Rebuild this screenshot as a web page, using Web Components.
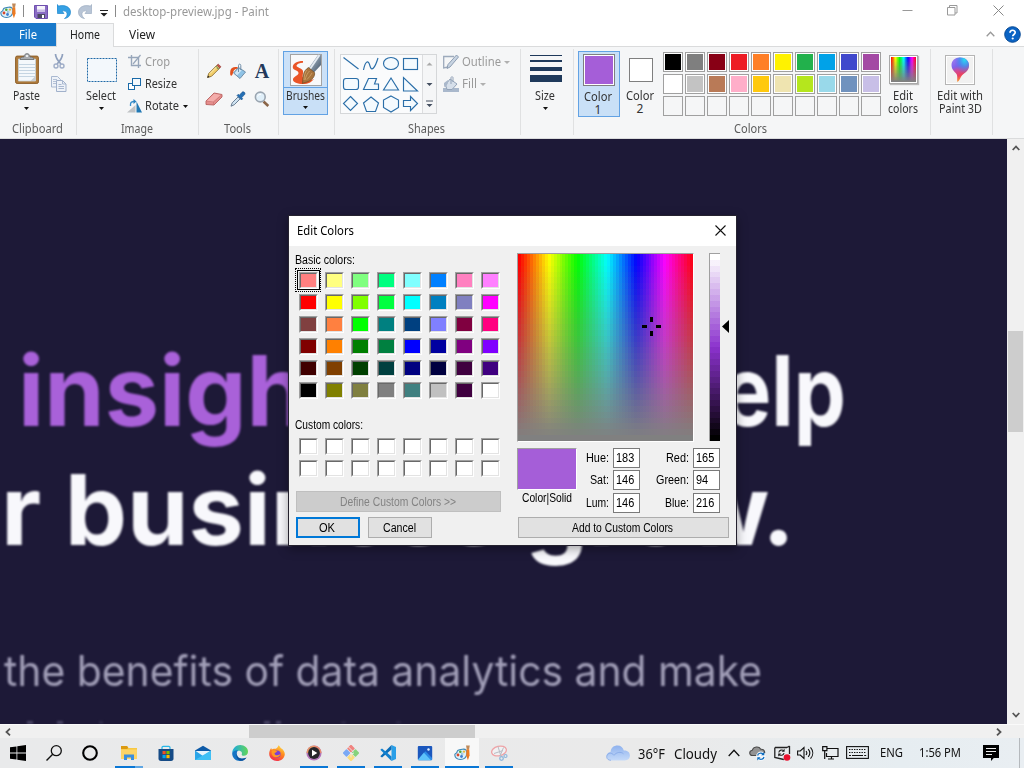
<!DOCTYPE html>
<html lang="en">
<head>
<meta charset="utf-8">
<title>desktop-preview.jpg - Paint</title>
<style>
html,body{margin:0;padding:0;background:#1d1937;overflow:hidden}
</style>
</head>
<body>
<paint-desktop></paint-desktop>
<script>
const define = (name, html, after) => customElements.define(name, class extends HTMLElement {
  connectedCallback() {
    if (this.shadowRoot) return;
    const root = this.attachShadow({ mode: 'open' });
    root.innerHTML = typeof html === 'function' ? html(this) : html;
    if (after) after(this, root);
  }
});

/* text squeezed or stretched to a given advance width */
define('fit-text', `<style>:host{display:inline-block;white-space:pre;flex:none}span{display:inline-block;transform-origin:0 50%}</style><span><slot></slot></span>`,
  (el, root) => {
    const w = +el.getAttribute('w');
    if (!w) return;
    const s = root.querySelector('span');
    const n = s.getBoundingClientRect().width;
    el.style.width = w + 'px';
    if (n) s.style.transform = `scaleX(${w / n})`;
  });

const PALETTE = `<path d="M8.5 4.2C12 3.6 13.3 6 12.8 9c-.5 3.500-3 5.500-6.500 5.500C3 14.500.8 12.500.8 9.800c0-1.300 1.200-1.300 1.800-2 .6-.7.3-1.800 1.500-2.500 1.300-.7 3-.9 4.400-1.100z" fill="#dff0fa" stroke="#3a86b5" stroke-width="1.100"/><circle cx="6.300" cy="6.800" r="1.300" fill="#4aa83c"/><circle cx="10" cy="6.600" r="1.200" fill="#e8b93a"/><circle cx="4" cy="10" r="1.400" fill="#d9482b"/><circle cx="7.500" cy="11.500" r="1.400" fill="#3f7fd0"/><circle cx="8.200" cy="9" r=".9" fill="#fff" stroke="#3a86b5" stroke-width=".5"/><path d="M12 .5h3.800l-.8 4h-2.200z" fill="#c08a5a"/><path d="M12.500 4.300h2.700l.4 6-1.700 5-1.700-5z" fill="#ee7b22"/>`;
const BUCKET = (a, b, c) => `<path d="M8.500 4.500L15.500 9l-5.500 6.500L3.500 10z" fill="${a}" stroke="${b}" stroke-width="1"/><path d="M8.500 5.500l3 2-4.500 5L4.800 10z" fill="#fff" opacity=".6"/><path d="M8.500 9V2.500c0-1.800 2.300-1.800 2.300 0V7" fill="none" stroke="${b}"/><path d="M8 4.300C4 3.200 1 4.500.4 7.500c-.3 2-.6 4.800.9 5.300 1.500-.3 1.700-3.300 2.400-5C4.500 6.300 6 5.800 7 5.700z" fill="${c}"/>`;
const ICONS = {
  palette: [16, 16, PALETTE],
  save: [14, 14, `<path d="M.5.500h13v13H2L.5 12z" fill="#8a6cc4" stroke="#6f4fae"/><path d="M3 1h8v5.500H3z" fill="#f6f4fb"/><path d="M3 4.500h8V7H3z" fill="#c9bde6"/><path d="M3.500 9h7.500v4H3.500z" fill="#4c4a63"/><path d="M8 10h2v3H8z" fill="#fff"/>`],
  undo: [14, 15, `<path d="M0 6V.5l1.800 1.600C8 .5 13.500 3 13.500 8.200c0 3.500-2.500 5.800-6 6.300 2-1.500 2.800-3 2.600-4.800-.3-2.500-2.800-3.400-5-2.500L7 9.500H.5z" fill="#35a0e4" stroke="#1f86cc" stroke-width=".7"/>`],
  redo: [14, 15, `<path d="M14 6V.5l-1.800 1.600C6 .5.5 3 .5 8.200c0 3.500 2.500 5.800 6 6.300-2-1.500-2.800-3-2.600-4.800.3-2.500 2.800-3.400 5-2.500L7 9.500h6.500z" fill="#b8c5d6" stroke="#9dadc2" stroke-width=".7"/>`],
  qat: [8, 8, `<path d="M0 1h8v1H0zM.5 4h7L4 7.500z" fill="#222"/>`],
  min: [11, 11, `<path d="M.5 5.500h10" stroke="#999"/>`],
  restore: [11, 11, `<path d="M.5 2.500h7.500v7.500H.5zM2.500 2.500v-2h7.500v7.500h-2" fill="none" stroke="#999"/>`],
  close: [11, 11, `<path d="M.5.500l10 10M10.500.500l-10 10" stroke="#888"/>`],
  closed: [11, 11, `<path d="M.5.500l10 10M10.500.500l-10 10" stroke="#111" stroke-width="1.100"/>`],
  chev: [9, 6, `<path d="M.7 5.300l3.800-4 3.800 4" fill="none" stroke="#999" stroke-width="1.300"/>`],
  help: [17, 17, `<circle cx="8.500" cy="8.500" r="7.800" fill="#0a63c4" stroke="#094a94"/><path d="M6 6.800c0-3.400 5.200-3.300 5.200-.3 0 1.900-2.500 2-2.500 3.800" fill="none" stroke="#fff" stroke-width="1.700"/><circle cx="8.700" cy="12.500" r="1.100" fill="#fff"/>`],
  arr: [5, 3, `<path d="M0 0h5L2.500 3z" fill="#111"/>`],
  arrg: [6, 3, `<path d="M0 0h6L3 3z" fill="#b0b0b0"/>`],
  paste: [24, 31, `<rect x=".6" y="3.100" width="22.800" height="27.300" rx="1.500" fill="#b07c3c" stroke="#8d5f2a"/><path d="M3.500 6h17v22h-17z" fill="#f4f8fb" stroke="#c9d4dc" stroke-width=".8"/><path d="M4 11.500h16M4 14.500h16M4 17.500h16M4 20.500h16M4 23.500h16" stroke="#c5d5e2"/><path d="M15.500 28l5-5v5z" fill="#c8ccd0"/><path d="M5 6.500c0-2 2-2.500 4-2.500 0-4.500 6-4.500 6 0 2 0 4 .5 4 2.500z" fill="#a9acb0" stroke="#66696d" stroke-width=".8"/><circle cx="12" cy="3" r="1" fill="#fff"/>`],
  cut: [16, 16, `<path d="M4.500 1c0 3 1.500 6 5.500 10M11.500 1c0 3-1.500 6-5.500 10" stroke="#8fa0bd" stroke-width="1.700" fill="none"/><circle cx="5" cy="13" r="2" fill="none" stroke="#a0aec8" stroke-width="1.400"/><circle cx="11" cy="13" r="2" fill="none" stroke="#a0aec8" stroke-width="1.400"/>`],
  copy: [16, 16, `<path d="M.5.500h6l3 3v7.500h-9z" fill="#eef2f8" stroke="#a9b8d0"/><path d="M2 3.500h4M2 5.500h5M2 7.500h5" stroke="#b4c1d6"/><path d="M5.500 4.500h6l3.500 3.500v7.500h-9.500z" fill="#eef2f8" stroke="#a1b1cb"/><path d="M11.500 4.500v3.500h3.500M7.500 8.500h3M7.500 10.500h5.500M7.500 12.500h5.500" fill="none" stroke="#a9b8d0"/>`],
  select: [30, 24, `<rect x=".5" y=".5" width="29" height="23" fill="#f3f8fc" stroke="#1f68a6" stroke-dasharray="2 1"/>`],
  crop: [16, 16, `<path d="M4.500 1v10.500H14M1 3.500h10.500V14" fill="none" stroke="#97a6ba" stroke-width="1.400"/><path d="M6 10l7.500-9" stroke="#97a6ba" stroke-width="1.200"/>`],
  resize: [16, 16, `<rect x="1.500" y="7.500" width="6" height="6" fill="#fff" stroke="#1a6aa8"/><rect x="5.500" y="2.500" width="8" height="7" fill="#f4f9fd" stroke="#1a6aa8"/>`],
  rotate: [16, 16, `<path d="M0 14.500h8.500V7z" fill="#c0c3c6"/><path d="M9.500 14.500V3.500l5.500 11z" fill="#2178b4"/><path d="M3.500 8V6.500C3.500 4.500 5 3.500 7 3.500" fill="none" stroke="#3a8fcb" stroke-width="1.300"/><path d="M6.500 1l3 2.500-3 2.500z" fill="#2a82c0"/>`],
  pencil: [16, 16, `<path d="M1.500 14.500l1.200-4L11 2.200l2.800 2.800-8.300 8.300z" fill="#f2cf6b" stroke="#8c6d2e" stroke-width=".9"/><path d="M1.300 14.700l.7-2.300 1.600 1.600z" fill="#222"/><path d="M11 2.200l1.200-1.100 2.800 2.700L13.800 5z" fill="#c7564f" stroke="#8e3832" stroke-width=".6"/><path d="M9.800 3.400l2.800 2.800" stroke="#6b8a5a" stroke-width="1.200"/><path d="M4 10.500l6.500-6.500" stroke="#fff0b8" stroke-width="1"/>`],
  fill: [16, 16, BUCKET('#8fc3e6', '#6f8ea8', '#e2511f')],
  eraser: [18, 14, `<path d="M1 9l8-8 8 1.500V5L9 13l-8-.5z" fill="#e58d8c" stroke="#b8605f" stroke-width=".9"/><path d="M1 9l7.500.8L17 2.500M8.500 9.800V13" fill="none" stroke="#c97574" stroke-width=".7"/><path d="M2 8.700l7.200-7 6.500 1.200-7.500 6.500z" fill="#f4adab"/>`],
  picker: [16, 16, `<path d="M1 15.200l1.200-3.400 6-6 2 2-6 6z" fill="#cfe3f1" stroke="#5d7389" stroke-width=".9"/><path d="M7 4.500l4.500 4.500 1.200-1.200-1-1.200 2.800-2.800c1.500-1.700-.8-4-2.500-2.500L9.300 4.200 8.200 3.300z" fill="#2570b5" stroke="#17518a" stroke-width=".6"/>`],
  zoom: [16, 16, `<path d="M9.500 10.500l4.800 4.500" stroke="#8a6548" stroke-width="2.600"/><circle cx="6.300" cy="6" r="4.900" fill="#e0eff9" stroke="#9aa5b0" stroke-width="1.600"/><path d="M3.500 5.500c.5-1.500 2-2.500 3.500-2" stroke="#fff" fill="none"/>`],
  brush: [32, 32, `<defs><linearGradient id="g" x1="0" y1="0" x2="1" y2="1"><stop offset="0" stop-color="#b9c4cf"/><stop offset=".5" stop-color="#7e8fa0"/><stop offset="1" stop-color="#3f5063"/></linearGradient></defs><rect x=".5" y=".5" width="31" height="31" fill="#f8f9fa" stroke="#a3a3a3"/><path d="M13 7C7 7 2.500 9.500 2.800 13.500c.3 3 5.500 2.500 5.700 5.500.2 2.500-4.500 3-5.500 6-.7 3.500 5 5 10 5 5.500 0 8.500-2 11-5-3.500 1.500-8 2-10 0-2.500-2.500-.5-5-1-8-.5-3-7-3.500-6.500-5.500.4-1.500 3.500-2.500 6.500-2.700z" fill="#ea5527"/><path d="M31 1v10l-7.500 8-5-4.500L28 1z" fill="url(#g)"/><path d="M29.500 1L20 15" stroke="#e4ebf2" stroke-width="2"/><path d="M18.500 13.500l6 5c1 4-3 8-7.500 9.500-2 .5-2.500.5-4.500 1.500.5-3 .2-6 1-9 .5-3 2.500-5.500 5-7z" fill="#a8743c" stroke="#6e4a22" stroke-width=".7"/><path d="M17 16c-2 2-3 6-3 10M19.500 17c-2 2-3.500 5-4.500 9M22 19c-1.500 2.500-3 4.500-5 6.500" stroke="#d2a56c" fill="none" stroke-width=".8"/>`],
  pen: [16, 16, `<path d="M11 2.500H.7V14L5 13" fill="none" stroke="#9daabc" stroke-width="1.300"/><path d="M4 14.500l1-4L13.500 1l2 2-8.500 10z" fill="#c8d4e2" stroke="#8495ab" stroke-width=".9"/>`],
  fillg: [16, 16, `<path d="M0 12h16v4H0z" fill="#a9b8cc"/><path d="M7 3l7 5-5 5.500H4L2.500 9z" fill="#d6dfea" stroke="#93a3b8" stroke-width="1"/><path d="M8 8V1.500c0-1 2-1 2 0V6" fill="none" stroke="#93a3b8"/><path d="M1 7l4-3v3c-1 1-1 3-2.500 4S1 9 1 7z" fill="#aab8cb"/>`],
  sizes: [32, 28, `<path d="M0 .5h32" stroke="#1e395b"/><path d="M0 5h32v2H0zM0 12h32v4H0zM0 20h32v7H0z" fill="#1e395b"/>`],
  p3d: [30, 30, `<defs><linearGradient id="a" x1=".2" y1="0" x2=".5" y2="1"><stop offset="0" stop-color="#a07cf0"/><stop offset=".35" stop-color="#7f63ea"/><stop offset=".52" stop-color="#cf4a9a"/><stop offset=".75" stop-color="#ec3f5c"/><stop offset="1" stop-color="#f7b52c"/></linearGradient><radialGradient id="b" cx=".75" cy=".08" r=".6"><stop offset="0" stop-color="#27e0f0"/><stop offset=".5" stop-color="#3f8ff0" stop-opacity=".8"/><stop offset="1" stop-color="#5a6cf0" stop-opacity="0"/></radialGradient></defs><rect x=".5" y=".5" width="29" height="29" fill="#fff" stroke="#b5b5b5"/><rect x="2" y="2" width="26" height="26" fill="#f1f1f1"/><path d="M15 2.500c5.500 0 9 3.500 9 8 0 6-5.500 7.500-7.500 10.500-1.200 2-2 4.500-4 6-.8-2 .5-5.500-1-8C9.500 16.500 6.500 14.500 6.500 10c0-4.500 3.500-7.500 8.500-7.500z" fill="url(#a)"/><path d="M15 2.500c5.500 0 9 3.500 9 8 0 6-5.500 7.500-7.500 10.500-1.200 2-2 4.500-4 6-.8-2 .5-5.500-1-8C9.500 16.500 6.500 14.500 6.500 10c0-4.500 3.500-7.500 8.500-7.500z" fill="url(#b)"/>`],
  win: [16, 16, `<path d="M0 2.300l6.500-.9v6.200H0zM7.300 1.300L16 0v7.600H7.300zM0 8.400h6.500v6.200L0 13.700zM7.300 8.400H16V16l-8.700-1.300z" fill="#000"/>`],
  search: [16, 16, `<circle cx="10.300" cy="5.700" r="5" fill="none" stroke="#111" stroke-width="1.300"/><path d="M6.700 9.300L.5 15.500" stroke="#111" stroke-width="1.400"/>`],
  cortana: [16, 16, `<circle cx="8" cy="8" r="6.800" fill="none" stroke="#000" stroke-width="2.100"/>`],
  explorer: [16, 16, `<path d="M0 1h6l1.500 2H16v11H0z" fill="#f7c843"/><path d="M0 1h6l1.200 1.800-1 1.200H0z" fill="#dc9a10"/><path d="M0 4.500h16V14H0z" fill="#fdd467"/><path d="M3 15V9.500h10V15h-3v-2.500H6V15z" fill="#3b8ede"/>`],
  store: [16, 16, `<path d="M4 5V2.500C4 1.800 4.500 1.300 5.200 1.300h5.600c.7 0 1.200.5 1.200 1.200V5" fill="none" stroke="#27b7e8" stroke-width="1.200"/><path d="M.5 4h15v9.500c0 1.500-.8 2.500-2.500 2.500H3C1.300 16 .5 15 .5 13.500z" fill="#164b86"/><path d="M4.500 6h3.200v3.200H4.500z" fill="#f25022"/><path d="M8.400 6h3.200v3.200H8.400z" fill="#7fba00"/><path d="M4.500 10h3.200v3.200H4.500z" fill="#00a4ef"/><path d="M8.400 10h3.200v3.200H8.400z" fill="#ffb900"/>`],
  mail: [16, 16, `<path d="M0 5.500L8 .8l8 4.700V11H0z" fill="#0d5aa7"/><path d="M1 6h14v5H1z" fill="#e8f4fc"/><path d="M0 5.500L8 11l8-5.500V15H0z" fill="#2aa5e8"/><path d="M0 15l16-9.500V15z" fill="#3fc0f5"/>`],
  edge: [16, 16, `<defs><linearGradient id="e"><stop offset="0" stop-color="#1ca8e0"/><stop offset="1" stop-color="#62d657"/></linearGradient></defs><path d="M.2 8C.5 3.500 4 0 8.200 0 12.700 0 16 3 16 6.700c0 2.500-2 4-4.200 4-1.700 0-2.500-.7-2-1.500.6-1.200-.2-3.500-3-3.500C4 5.700 1.300 6.500.2 8z" fill="url(#e)"/><path d="M.2 8C1.200 6 4 5 6 5.500 3.500 8 5 13 9.500 13.500c2 .2 3.500-.3 5-1C13 15 10.500 16 8 16 3.500 16 0 12.500.2 8z" fill="#1574c4"/><path d="M5.200 8c-1 3 1 6 5 5.700 1.500 0 3-.5 4.300-1.200C13 15 10.500 16 8.500 15.800 5 15 3.500 11 5.200 8z" fill="#0c4f99"/>`],
  firefox: [16, 16, `<defs><linearGradient id="f" x1=".8" y1="0" x2=".3" y2="1"><stop offset="0" stop-color="#ffe14a"/><stop offset=".45" stop-color="#ff8a1e"/><stop offset="1" stop-color="#f2294e"/></linearGradient></defs><path d="M9.500.2c1 .8 1.700 1.800 2.200 2.800C14.500 4.500 16 7 15.800 9.500 15.500 13.300 12 16 8 16S.3 13 .2 9C.1 6.500 1 4.500 2.200 3l.6 1.700C3.500 4 4.500 3.600 5.500 3.800 7 4 8.500 3 9.500.2z" fill="url(#f)"/><circle cx="8" cy="9" r="3.600" fill="#7a3fd6"/><path d="M3 5.500c2-.8 4 0 5.500 1.500-1.500 0-2 .7-3 1.200 0 1.300 1.500 2.300 3 2 1-.2 2-1.200 3-1-1 3-5 4-7.500 2C2.500 9.500 2.200 7.500 3 5.500z" fill="#ff9a22"/>`],
  media: [16, 16, `<circle cx="8" cy="8" r="7.600" fill="#b274b8"/><path d="M8 .4a7.600 7.600 0 0 1 7.600 7.600L8 8z" fill="#e88a70"/><path d="M8 .4A7.600 7.600 0 0 0 .4 8L8 8z" fill="#e8996a"/><circle cx="8" cy="8" r="5.900" fill="#26262a"/><path d="M6 4.700v6.600L11.300 8z" fill="#fff"/>`],
  git: [16, 16, `<g transform="rotate(45 8 8)"><rect x="2" y="2" width="5.700" height="5.700" rx=".8" fill="#f0837f"/><rect x="8.300" y="2" width="5.700" height="5.700" rx=".8" fill="#86d37c"/><rect x="2" y="8.300" width="5.700" height="5.700" rx=".8" fill="#7ba9f5"/><rect x="8.300" y="8.300" width="5.700" height="5.700" rx=".8" fill="#fbdc7c"/></g><path d="M5 1.500l5 5M8 7.500v5M8 9l3-1" stroke="#eee" stroke-width=".9"/>`],
  vscode: [16, 16, `<path d="M11.500 0L16 2v12l-4.500 2z" fill="#2a9fe8"/><path d="M11.500 0v4.500L2 12.500.3 11.200 11.500 0z" fill="#0a6db8"/><path d="M11.500 16v-4.500L2 3.500.3 4.800z" fill="#1180cf"/>`],
  photos: [16, 16, `<rect x=".8" y="1" width="14.400" height="14.300" rx="1" fill="#1b57bd"/><path d="M1 14.500L7 7.500l7.500 7.800H1.500z" fill="#5cc3fb"/><path d="M7 7.500l1.500-1.300L15 13v2h-1z" fill="#2b8be8"/><circle cx="11.500" cy="4.500" r="1.200" fill="#e4f2ff"/>`],
  snip: [17, 17, `<ellipse cx="8" cy="6" rx="7.500" ry="4.700" transform="rotate(-14 8 6)" fill="#f1f1f3" stroke="#efa3a6" stroke-width="1.300"/><path d="M7 1.500l3 10M3 8.500l9-3M12.500 2.500L9 11" stroke="#b9bdc4" stroke-width="1"/><circle cx="10.500" cy="13.500" r="1.800" fill="none" stroke="#8fb6da" stroke-width="1.300"/><circle cx="14.500" cy="11" r="1.500" fill="none" stroke="#8fb6da" stroke-width="1.200"/>`],
  cloud: [24, 16, `<defs><linearGradient id="c" x1="0" y1="0" x2="0" y2="1"><stop offset="0" stop-color="#8fb2ee"/><stop offset="1" stop-color="#c5daf9"/></linearGradient></defs><path d="M5 15.500C-1 15.500-1 7.500 4.500 7 5 2.500 8 .5 11.500.500c3.500 0 5.500 2 6.300 5 8-.5 8 10 1 10z" fill="url(#c)"/><path d="M5 15.300c-5 0-5.500-5-2-7 2-.5 4 .5 5 2 2-3 7-4 9.500-1.500" fill="none" stroke="#7ea4e4" stroke-width=".7"/>`],
  up: [12, 8, `<path d="M.7 7L6 1.300 11.300 7" fill="none" stroke="#111" stroke-width="1.300"/>`],
  onedrive: [17, 16, `<path d="M3.500 10.500C-.3 10.500 0 5.800 3.300 5.200 4.500 1.500 9.800.8 11.800 4.200c2.500-.2 3.900 1.500 3.900 3.300L8 10.500z" fill="#939393" stroke="#4a4a4a" stroke-width="1.100"/><circle cx="11.800" cy="11.300" r="4.700" fill="#f4f7fa"/><path d="M8.600 10.500c.6-2.600 4-3 5.700-1.100M15 12c-.6 2.600-4 3-5.700 1.100" fill="none" stroke="#0b6cc0" stroke-width="1.200"/><path d="M15.300 7v3.200h-3.200zM8.300 15.500v-3.200h3.200z" fill="#0b6cc0"/>`],
  update: [17, 16, `<path d="M1 2.500h12M.8 2.500V12.500l9 2M15.500 1v8M13 2.500l2.500-1.500" fill="none" stroke="#222" stroke-width="1.300"/><path d="M4.800 7.500c.3-2.500 3.700-3.300 5-1.500M10 8c-.3 2.300-3.500 3-5 1.500" fill="none" stroke="#222" stroke-width="1.100"/><path d="M10.600 3.800v3h-3zM4.200 11.500v-3h3z" fill="#222"/><circle cx="13" cy="12.500" r="3.300" fill="#e8112d"/>`],
  sound: [17, 14, `<path d="M.6 5h2.700L7 1.500v11L3.300 9H.6z" fill="none" stroke="#111" stroke-width="1.100"/><path d="M9 5c1 1.200 1 2.800 0 4M11.200 3.200c2 2.300 2 5.300 0 7.600M13.500 1.300c3 3.400 3 8 0 11.400" fill="none" stroke="#111" stroke-width="1.100"/>`],
  net: [17, 14, `<path d="M5 2.500h11v8H4.500V7" fill="none" stroke="#111" stroke-width="1.200"/><path d="M6 13h6M9.500 10.500V13M.7.700h4.200v4H.7zM2.700 4.700V13" fill="none" stroke="#111" stroke-width="1.200"/>`],
  kbd: [23, 13, `<rect x=".6" y=".6" width="21.800" height="11.800" fill="none" stroke="#111" stroke-width="1.100"/><path d="M3 3.500h17M3 6.500h17" stroke="#111" stroke-dasharray="1.400 1.100"/><path d="M3 9.500h2M6 9.500h11M18.200 9.500h2" stroke="#111"/>`],
  note: [16, 16, `<path d="M0 0h16v13h-5.200L8 16v-3H0z" fill="#000"/><path d="M3 3.500h10M3 6.500h10M3 9.500h6" stroke="#eee" stroke-width="1.100"/>`],
  sl: [6, 8, `<path d="M5 .7L1.500 4 5 7.300" fill="none" stroke="#555" stroke-width="1.800"/>`],
  sr: [6, 8, `<path d="M1 .7L4.500 4 1 7.300" fill="none" stroke="#555" stroke-width="1.800"/>`],
  su: [8, 6, `<path d="M.7 5L4 1.500 7.300 5" fill="none" stroke="#555" stroke-width="1.800"/>`],
  sd: [8, 6, `<path d="M.7 1L4 4.500 7.300 1" fill="none" stroke="#555" stroke-width="1.800"/>`],
  mark: [7, 13, `<path d="M7 0v13L0 6.500z" fill="#000"/>`]
};
define('ui-icon', el => {
  const [w, h, d] = ICONS[el.getAttribute('name')];
  return `<style>:host{display:inline-block;flex:none;width:${w}px;height:${h}px}svg{display:block}</style><svg width="${w}" height="${h}" viewBox="0 0 ${w} ${h}">${d}</svg>`;
});

const hues = () => {
  const stops = [], n = 59;
  for (let i = 0; i < n; i++) {
    const c = `hsl(${i / n * 360} 100% 50%)`;
    stops.push(`${c} ${i / n * 100}% ${(i + 1) / n * 100}%`);
  }
  return `linear-gradient(90deg,${stops.join()})`;
};
const bands = (fn, n = 32) => {
  const s = [];
  for (let i = 0; i < n; i++) s.push(`${fn(i / (n - 1))} ${i / n * 100}% ${(i + 1) / n * 100}%`);
  return `linear-gradient(180deg,${s.join()})`;
};
const SPECTRUM = `${bands(t => `rgb(128 128 128 / ${t})`)},${hues()}`;
const LUM = bands(t => `hsl(274.5 61% ${100 - t * 100}%)`);

define('title-bar', `<style>
:host{display:flex;height:23px;background:#fff;align-items:flex-start}
i{width:1px;height:12px;background:#8a8a8a;margin-top:5px}
fit-text{color:#999;line-height:24px}
.sp{flex:1}
</style>
<ui-icon name="palette" style="margin-top:3px"></ui-icon><i style="margin-left:7px"></i>
<ui-icon name="save" style="margin:5px 0 0 10px"></ui-icon>
<ui-icon name="undo" style="margin:4px 0 0 9px"></ui-icon>
<ui-icon name="redo" style="margin:4px 0 0 7px"></ui-icon>
<ui-icon name="qat" style="margin:9px 0 0 8px"></ui-icon><i style="margin-left:7px"></i>
<fit-text w="146" style="margin-left:7px">desktop-preview.jpg - Paint</fit-text><span class="sp"></span>
<ui-icon name="min" style="margin:5px 34px 0 0"></ui-icon>
<ui-icon name="restore" style="margin:5px 35px 0 0"></ui-icon>
<ui-icon name="close" style="margin:5px 20px 0 0"></ui-icon>`);

define('tab-strip', `<style>
:host{display:flex;height:23px;background:#fff;border-bottom:1px solid #dadbdc;color:#222;line-height:24px}
.t{box-sizing:border-box;text-align:center;height:23px}
.f{width:56px;background:#1979ca;color:#fff}
.h{width:58px;height:24px;background:#f5f6f7;border:1px solid #dadbdc;border-bottom:0;line-height:22px;margin-bottom:-1px}
.v{margin-left:15px}.sp{flex:1}
</style>
<div class="t f"><fit-text w="18">File</fit-text></div>
<div class="t h"><fit-text w="30">Home</fit-text></div>
<div class="t v"><fit-text w="26">View</fit-text></div><span class="sp"></span>
<ui-icon name="chev" style="margin:8px 9px 0 0"></ui-icon>
<ui-icon name="help" style="margin:3px 3px 0 0"></ui-icon>`);

define('ribbon-group', el => `<style>
:host{display:block;box-sizing:border-box;flex:none;width:${el.getAttribute('w')}px;height:86px;border-right:1px solid #e0e1e2}
.c{display:flex;height:72px;align-items:flex-start}
.l{height:16px;line-height:16px;text-align:center;color:#5c5c5c;padding-right:${el.getAttribute('lp') || 2}px}
</style><div class="c"><slot></slot></div><div class="l"><fit-text w="${el.getAttribute('lw') || 0}">${el.getAttribute('label') || ''}</fit-text></div>`);

define('big-button', el => `<style>
:host{display:flex;flex-direction:column;align-items:center;box-sizing:border-box;line-height:13px;width:${el.getAttribute('w')}px}
.i{height:${el.getAttribute('ih') || 36}px;display:flex;align-items:flex-start}
.t{display:flex;flex-direction:column;align-items:center;padding-right:${el.getAttribute('tp') || 0}px}
.a{height:13px;display:flex;align-items:center;padding-right:${el.getAttribute('tp') || 0}px}
</style><div class="i"><slot name="icon"></slot></div><div class="t"><slot></slot></div>${el.hasAttribute('menu') ? '<div class="a"><ui-icon name="arr"></ui-icon></div>' : ''}`);

define('small-button', `<style>
:host{display:flex;align-items:center;height:22px;line-height:22px}
</style><slot></slot>`);

const ROW1 = ['#000', '#7f7f7f', '#880015', '#ed1c24', '#ff7f27', '#fff200', '#22b14c', '#00a2e8', '#3f48cc', '#a349a4'];
const ROW2 = ['#fff', '#c3c3c3', '#b97a57', '#ffaec9', '#ffc90e', '#efe4b0', '#b5e61d', '#99d9ea', '#7092be', '#c8bfe7'];
define('color-swatches', `<style>
:host{display:grid;grid-template-columns:repeat(10,20px);grid-auto-rows:20px;gap:2px}
b{box-sizing:border-box;border:1px solid #a0a0a0;padding:1px}
b.c{background:#fff}
u{display:block;width:16px;height:16px}
b.e{background:#f5f6f7}
</style>` + [...ROW1, ...ROW2].map(c => `<b class="c"><u style="background:${c}"></u></b>`).join('') + '<b class="e"></b>'.repeat(10));

define('shape-gallery', `<style>
:host{display:flex;box-sizing:border-box;width:97px;height:60px;border:1px solid #d5d7d9;background:#fafbfc}
.s{width:13px;background:#f5f6f7;border-left:1px solid #dcdddf}
svg{display:block}
</style>
<svg width="81" height="58" viewBox="341 55 81 58" fill="#f4fafe" stroke="#2a6ea8" stroke-width="1.150">
<path d="M343.500 57.500l15 11.500" fill="none"/><path d="M363.500 70c2-10 5-10 6.500-4s5 2 8-8" fill="none"/><ellipse cx="391" cy="63.500" rx="7.500" ry="6"/><rect x="403.500" y="58.500" width="14" height="11"/>
<rect x="343.500" y="78.500" width="15" height="11" rx="2.500"/><path d="M368.500 78.500h8l-2 5.500h4v5.500h-15z"/><path d="M391 78l7.500 12h-15z"/><path d="M403.500 77.500v13.500h14z"/>
<path d="M350.500 96.500l7 7-7 7-7-7z"/><path d="M371 97l7.500 6-3 8.500h-9l-3-8.500z"/><path d="M391 96l7.500 4v7.500L391 112l-7.500-4.500V100z"/><path d="M403.500 100.500h7v-4l7 7-7 7v-4h-7z"/>
</svg>
<div class="s"><svg width="13" height="58" viewBox="423 55 13 58"><path d="M426.500 65.500h6l-3-3z" fill="#aaa"/><path d="M426.500 83h6l-3 3zM426.500 104h6l-3 3zM426 100.500h7v1h-7z" fill="#444f60"/></svg></div>`);

define('paint-ribbon', `<style>
:host{display:flex;box-sizing:border-box;height:92px;background:#f5f6f7;padding-top:2px;border-bottom:1px solid #dadbdc;color:#333}
.col{display:flex;flex-direction:column}
.dis{color:#9a9a9a}
.tools{display:grid;grid-template-columns:repeat(3,24px);grid-auto-rows:28px;place-items:center;margin:8px 0 0 3px}
.A{font:bold 20px/20px "Liberation Serif",serif;color:#23395b}
.br{background:linear-gradient(#cbe1f8 0 35px,#62a2e4 35px 36px,#c9e0f7 36px);border:1px solid #62a2e4;height:64px;padding-top:2px;margin:2px 0 0 4px}
.c1{background:#c9e0f7;border:1px solid #62a2e4;height:66px;padding-top:2px;margin:2px 0 0 4px}
.w{box-sizing:border-box;border:1px solid #7f7f7f;padding:1px;background:#fff}
.w u{display:block;width:100%;height:100%}
.ec{box-sizing:border-box;width:29px;height:29px;border:1px solid #a8a8a8;padding:1px;background:#fff;box-shadow:1px 1px 1px #bbb}
.ec u{display:block;width:25px;height:25px;background:${SPECTRUM}}
</style>
<ribbon-group w="77" label="Clipboard" lw="51">
 <big-button w="51" menu style="padding-top:4px;margin-left:1px"><ui-icon slot="icon" name="paste"></ui-icon><fit-text w="27">Paste</fit-text></big-button>
 <div class="col" style="gap:7px;margin:4px 0 0 -1px"><ui-icon name="cut"></ui-icon><ui-icon name="copy"></ui-icon></div>
</ribbon-group>
<ribbon-group w="122" label="Image" lw="32">
 <big-button w="49" tp="1" menu style="padding-top:4px"><ui-icon slot="icon" name="select" style="margin-top:5px"></ui-icon><fit-text w="30">Select</fit-text></big-button>
 <div class="col" style="margin:2px 0 0 1px">
  <small-button class="dis"><ui-icon name="crop"></ui-icon><fit-text w="25" style="margin-left:2px">Crop</fit-text></small-button>
  <small-button><ui-icon name="resize"></ui-icon><fit-text w="32" style="margin-left:2px">Resize</fit-text></small-button>
  <small-button><ui-icon name="rotate"></ui-icon><fit-text w="34" style="margin-left:2px">Rotate</fit-text><ui-icon name="arr" style="margin-left:4px"></ui-icon></small-button>
 </div>
</ribbon-group>
<ribbon-group w="80" label="Tools" lw="27">
 <div class="tools"><ui-icon name="pencil"></ui-icon><ui-icon name="fill"></ui-icon><span class="A">A</span><ui-icon name="eraser"></ui-icon><ui-icon name="picker"></ui-icon><ui-icon name="zoom"></ui-icon></div>
</ribbon-group>
<ribbon-group w="56">
 <big-button class="br" w="45" ih="36" tp="1" menu><ui-icon slot="icon" name="brush"></ui-icon><fit-text w="39">Brushes</fit-text></big-button>
</ribbon-group>
<ribbon-group w="186" label="Shapes" lw="37">
 <shape-gallery style="margin:5px 0 0 5px"></shape-gallery>
 <div class="col dis" style="margin:2px 0 0 6px">
  <small-button><ui-icon name="pen"></ui-icon><fit-text w="39" style="margin-left:3px">Outline</fit-text><ui-icon name="arrg" style="margin-left:3px"></ui-icon></small-button>
  <small-button><ui-icon name="fillg"></ui-icon><fit-text w="15" style="margin-left:3px">Fill</fit-text><ui-icon name="arrg" style="margin-left:3px"></ui-icon></small-button>
 </div>
</ribbon-group>
<ribbon-group w="53">
 <big-button w="50" tp="2" menu style="padding-top:4px"><ui-icon slot="icon" name="sizes" style="margin-top:2px"></ui-icon><fit-text w="20">Size</fit-text></big-button>
</ribbon-group>
<ribbon-group w="357" label="Colors" lw="33" lp="4">
 <big-button class="c1" w="42" ih="36" tp="2"><div slot="icon" class="w" style="width:32px;height:32px"><u style="background:#a55ed8"></u></div><fit-text w="28">Color</fit-text><span>1</span></big-button>
 <big-button w="42" tp="2" style="padding-top:4px;height:72px"><div slot="icon" class="w" style="width:24px;height:24px;margin-top:5px"></div><fit-text w="28">Color</fit-text><span>2</span></big-button>
 <color-swatches style="margin:3px 0 0 1px"></color-swatches>
 <big-button w="44" tp="1" style="padding-top:4px"><div slot="icon" class="ec" style="margin-top:2px"><u></u></div><fit-text w="20">Edit</fit-text><fit-text w="30">colors</fit-text></big-button>
</ribbon-group>
<ribbon-group w="62">
 <big-button w="58" style="padding-top:4px"><ui-icon slot="icon" name="p3d" style="margin-top:2px"></ui-icon><fit-text w="46">Edit with</fit-text><fit-text w="43">Paint 3D</fit-text></big-button>
</ribbon-group>`);

define('image-canvas', `<style>
:host{display:block;flex:1;background:#1d1937;overflow:hidden;font-family:Inter,sans-serif}
.p{filter:blur(.9px);padding-top:192px}
.l{display:flex;height:119px;font:700 97px/119px Inter,sans-serif;color:#f8f8fc;white-space:nowrap}
.s{font:400 42px/50px Inter,sans-serif;height:50px;color:#a29fb8;margin-top:77px;padding-left:4px}
.k{display:flex;margin-top:25px;height:3px}.k i{height:3px;background:#4a4666}
.h{display:block;width:271px;overflow:hidden;margin-left:18px;color:#a961d9}
.e{display:flex;justify-content:flex-end;width:114px;margin-left:443px}
</style><div class="p">
<div class="l"><div class="h"><fit-text w="289">insigh</fit-text></div><div class="e"><fit-text w="124">elp</fit-text></div></div>
<div class="l"><fit-text w="794" style="margin-left:1px">r business grow.</fit-text></div>
<div class="s"><fit-text w="758">the benefits of data analytics and make</fit-text></div>
<div class="k"><i style="width:6px;margin-left:27px"></i><i style="width:6px;margin-left:24px"></i><i style="width:4px;margin-left:36px;opacity:.4"></i><i style="width:6px;margin-left:161px"></i><i style="width:5px;margin-left:6px"></i><i style="width:5px;margin-left:60px;opacity:.3"></i><i style="width:5px;margin-left:50px;opacity:.3"></i></div>
</div>`);

define('scroll-bar', el => el.hasAttribute('vertical') ? `<style>
:host{display:flex;flex-direction:column;align-items:center;width:17px;background:#f0f0f0}
.t{width:15px;height:101px;background:#cdcdcd;margin-top:180px}.sp{flex:1}
</style><ui-icon name="su" style="margin-top:6px"></ui-icon><div class="t"></div><span class="sp"></span><ui-icon name="sd" style="margin-bottom:6px"></ui-icon>` : `<style>
:host{display:flex;height:13px;border-top:1px solid #fafafa;background:#f0f0f0;align-items:flex-start}
.t{width:226px;height:13px;background:#cdcdcd;margin-left:238px}.sp{flex:1}
ui-icon{margin-top:3px}
</style><ui-icon name="sl" style="margin-left:5px"></ui-icon><div class="t"></div><span class="sp"></span><ui-icon name="sr" style="margin-right:22px"></ui-icon>`);

const BASIC = `ff8080 ffff80 80ff80 00ff80 80ffff 0080ff ff80c0 ff80ff
ff0000 ffff00 80ff00 00ff40 00ffff 0080c0 8080c0 ff00ff
804040 ff8040 00ff00 008080 004080 8080ff 800040 ff0080
800000 ff8000 008000 008040 0000ff 0000a0 800080 8000ff
400000 804000 004000 004040 000080 000040 400040 400080
000000 808000 808040 808080 408080 c0c0c0 400040 ffffff`.split(/\s+/);
define('color-well', el => `<style>
:host{display:block;box-sizing:border-box;width:19px;height:17px;border:1px solid;border-color:#a0a0a0 #fff #fff #a0a0a0;position:relative}
i{display:block;height:13px;border:1px solid;border-color:#696969 #e3e3e3 #e3e3e3 #696969;background:#${el.getAttribute('color')}}
:host([selected])::before{content:"";position:absolute;inset:-3px -3px -2px -3px;border:1px solid #000}
:host([selected])::after{content:"";position:absolute;inset:-5px -4px -4px -5px;border:1px dotted #000}
</style><i></i>`);
define('value-field', el => `<style>
:host{display:flex;justify-content:flex-end;line-height:20px;height:20px}
.b{box-sizing:border-box;width:27px;height:20px;border:1px solid #7a7a7a;background:#fff;line-height:18px;padding-left:2px;margin-left:4px}
</style><fit-text w="${el.getAttribute('lw')}">${el.getAttribute('label')}</fit-text><div class="b"><fit-text w="${el.getAttribute('value').length * 6.1}">${el.getAttribute('value')}</fit-text></div>`);
define('push-button', `<style>
:host{display:block;box-sizing:border-box;height:21px;line-height:20px;text-align:center;border:1px solid #adadad;background:#e1e1e1;padding-right:2px}
:host([default]){border:2px solid #0078d7;line-height:18px}
:host([disabled]){background:#ccc;border-color:#bfbfbf;color:#838383}
</style><slot></slot>`);

define('color-dialog', `<style>
:host{display:block;box-sizing:border-box;width:447px;height:329px;background:#f0f0f0;font:12px/14px "Liberation Sans",Arial,sans-serif;color:#000;box-shadow:0 0 0 1px #25222f,0 3px 10px 1px rgba(0,0,0,.35)}
.bar{display:flex;justify-content:space-between;height:30px;background:#fff;font:12px/30px "Noto Sans",sans-serif;padding:0 10px 0 8px}
.body{display:flex;padding:7px 7px 0 6px}
.l{width:222px}.r{width:212px}
.g{display:grid;grid-template-columns:repeat(8,19px);grid-auto-rows:17px;gap:5px 7px;margin-left:4px}
.row{display:flex}
.lab{height:14px}
.spec{box-sizing:border-box;width:177px;height:189px;border:1px solid;border-color:#a0a0a0 #fff #fff #a0a0a0;background:${SPECTRUM};position:relative}
.spec svg{position:absolute;left:124px;top:63px}
.lum{box-sizing:border-box;width:11px;height:188px;border:solid #a0a0a0;border-width:1px 0 0 1px;background:${LUM};margin-left:15px}
.sw{box-sizing:border-box;width:60px;height:42px;background:#a55ed8;border:1px solid;border-color:#a0a0a0 #fff #fff #a0a0a0}
.f{display:grid;grid-template-columns:63px 80px;grid-template-rows:22px 23px 20px}
</style>
<div class="bar"><fit-text w="57">Edit Colors</fit-text><ui-icon name="closed" style="margin-top:9px"></ui-icon></div>
<div class="body">
<div class="l">
 <div class="lab"><fit-text w="60">Basic colors:</fit-text></div>
 <div class="g" style="margin-top:5px">${BASIC.map((c, i) => `<color-well color="${c}"${i ? '' : ' selected'}></color-well>`).join('')}</div>
 <div class="lab" style="margin-top:19px"><fit-text w="68">Custom colors:</fit-text></div>
 <div class="g" style="margin-top:6px">${'<color-well color="fff"></color-well>'.repeat(16)}</div>
 <push-button disabled style="width:205px;margin:14px 0 0 1px"><fit-text w="116">Define Custom Colors &gt;&gt;</fit-text></push-button>
 <div class="row" style="margin:5px 0 0 1px;gap:8px"><push-button default style="width:64px"><fit-text w="16">OK</fit-text></push-button><push-button style="width:64px"><fit-text w="33">Cancel</fit-text></push-button></div>
</div>
<div class="r">
 <div class="row" style="height:188px;align-items:flex-start"><div class="spec"></div><div class="lum"></div><ui-icon name="mark" style="margin:67px 0 0 2px"></ui-icon></div>
 <div class="row" style="margin-top:7px;height:65px"><div><div class="sw"></div><div class="lab" style="margin:1px 0 0 5px"><fit-text w="50">Color|Solid</fit-text></div></div>
 <div class="f"><value-field label="Hue:" lw="23" value="183"></value-field><value-field label="Red:" lw="23" value="165"></value-field>
 <value-field label="Sat:" lw="19" value="146"></value-field><value-field label="Green:" lw="33" value="94"></value-field>
 <value-field label="Lum:" lw="23" value="146"></value-field><value-field label="Blue:" lw="24" value="216"></value-field></div></div>
 <push-button style="width:211px;margin:4px 0 0 1px"><fit-text w="101">Add to Custom Colors</fit-text></push-button>
</div>
</div>`, (el, root) => {
  root.querySelector('.spec').innerHTML = '<svg width="19" height="19"><path d="M8 0h3v5H8zM8 14h3v5H8zM0 8h5v3H0zM14 8h5v3h-5z"/></svg>';
});

define('task-item', el => `<style>
:host{display:block;width:37px;height:30px;position:relative}
ui-icon{margin:7px 0 0 10px}
:host([active]) .bg{position:absolute;inset:0 2px 0 1px;background:#f8f8f8;z-index:-1}
:host([open])::after{content:"";position:absolute;bottom:0;left:4px;width:28px;height:2px;background:#0a77d5}
:host([active])::after{left:1px;width:34px}
:host([stack])::after{background:linear-gradient(90deg,#0a77d5 20px,#5ea6e3 20px)}
</style><div class="bg"></div><ui-icon name="${el.getAttribute('icon')}"></ui-icon>`);
define('task-bar', `<style>
:host{display:flex;height:30px;background:linear-gradient(90deg,#e9eaeb 0,#eaeaea 65%,#e6edf1 88%,#e9eef2 100%);color:#111;line-height:31px;isolation:isolate}
.q{margin-top:7px}
.sp{flex:1}
.w{font-size:14px}
i{width:1px;background:#b5b9bd;height:30px}
</style>
<ui-icon class="q" name="win" style="margin-left:10px"></ui-icon>
<ui-icon class="q" name="search" style="margin-left:20px"></ui-icon>
<ui-icon class="q" name="cortana" style="margin:7px 13px 0 20px"></ui-icon>
<task-item icon="explorer" open stack></task-item><task-item icon="store"></task-item><task-item icon="mail"></task-item><task-item icon="edge"></task-item><task-item icon="firefox"></task-item><task-item icon="media" open></task-item><task-item icon="git" open></task-item><task-item icon="vscode" open></task-item><task-item icon="photos" open></task-item><task-item icon="palette" open active></task-item><task-item icon="snip" open></task-item>
<ui-icon class="q" name="cloud" style="margin-left:88px"></ui-icon>
<fit-text class="w" w="27" style="margin-left:8px">36°F</fit-text><fit-text class="w" w="43" style="margin-left:9px">Cloudy</fit-text>
<ui-icon name="up" style="margin:11px 0 0 11px"></ui-icon>
<ui-icon class="q" name="onedrive" style="margin-left:9px"></ui-icon>
<ui-icon class="q" name="update" style="margin-left:8px"></ui-icon>
<ui-icon name="sound" style="margin:8px 0 0 6px"></ui-icon>
<ui-icon name="net" style="margin:8px 0 0 8px"></ui-icon>
<ui-icon name="kbd" style="margin:8px 0 0 7px"></ui-icon>
<fit-text w="23" style="margin-left:11px;line-height:30px">ENG</fit-text>
<fit-text w="42" style="margin-left:16px;line-height:30px">1:56 PM</fit-text><span class="sp"></span>
<ui-icon class="q" name="note" style="margin-right:20px"></ui-icon><i style="margin-right:4px"></i>`);

define('paint-desktop', `<style>
:host{display:flex;flex-direction:column;width:1024px;height:768px;font:12px/16px "Noto Sans","Open Sans",sans-serif;position:relative;overflow:hidden}
.v{display:flex;height:585px}
color-dialog{position:absolute;left:289px;top:216px}
</style>
<title-bar></title-bar><tab-strip></tab-strip><paint-ribbon></paint-ribbon>
<div class="v"><image-canvas></image-canvas><scroll-bar vertical></scroll-bar></div>
<scroll-bar></scroll-bar>
<task-bar></task-bar>
<color-dialog></color-dialog>`);
</script>
</body>
</html>
